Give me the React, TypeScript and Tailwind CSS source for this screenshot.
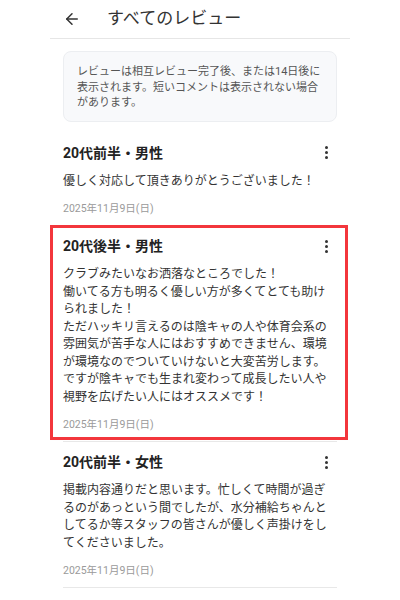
import React from 'react';
import { ArrowLeft } from 'lucide-react';

interface Review {
  title: string;
  body: string[];
  date: string;
  highlight?: boolean;
}

const reviews: Review[] = [
  {
    title: '20代前半・男性',
    body: ['優しく対応して頂きありがとうございました！'],
    date: '2025年11月9日(日)',
  },
  {
    title: '20代後半・男性',
    body: [
      'クラブみたいなお洒落なところでした！',
      '働いてる方も明るく優しい方が多くてとても助けられました！',
      'ただハッキリ言えるのは陰キャの人や体育会系の雰囲気が苦手な人にはおすすめできません、環境が環境なのでついていけないと大変苦労します。',
      'ですが陰キャでも生まれ変わって成長したい人や視野を広げたい人にはオススメです！',
    ],
    date: '2025年11月9日(日)',
    highlight: true,
  },
  {
    title: '20代前半・女性',
    body: [
      '掲載内容通りだと思います。忙しくて時間が過ぎるのがあっという間でしたが、水分補給ちゃんとしてるか等スタッフの皆さんが優しく声掛けをしてくださいました。',
    ],
    date: '2025年11月9日(日)',
  },
];

const MoreDots = () => (
  <div className="flex flex-col items-center gap-[2px] w-[6px]">
    <span className="block w-[3px] h-[3px] rounded-full bg-[#333]" />
    <span className="block w-[3px] h-[3px] rounded-full bg-[#333]" />
    <span className="block w-[3px] h-[3px] rounded-full bg-[#333]" />
  </div>
);

const ReviewItem: React.FC<{ review: Review }> = ({ review }) => {
  return (
    <div className="relative px-[13px]">
      <div className="pt-[10px] pb-[9px] border-b border-[#e8e8e8]">
        <div className="flex items-center justify-between">
          <h2 className="text-[14px] leading-[20px] font-bold text-[#222]">{review.title}</h2>
          <div className="mr-[8px]">
            <MoreDots />
          </div>
        </div>
        <div className="mt-[10px] text-[12px] leading-[17.5px] text-[#333]">
          {review.body.map((line, i) => (
            <p key={i}>{line}</p>
          ))}
        </div>
        <p className="mt-[12px] text-[10.5px] leading-[14px] text-[#9a9a9a]">{review.date}</p>
      </div>
      {review.highlight && (
        <div className="absolute inset-0 -top-[1px] bottom-[2px] right-[2px] border-[3px] border-[#f3363c] pointer-events-none" />
      )}
    </div>
  );
};

export default function App() {
  return (
    <div
      className="w-[400px] min-h-[600px] bg-white"
      style={{ fontFamily: 'Roboto, "Noto Sans CJK JP", sans-serif' }}
    >
      <div className="mx-[50px]">
        <header className="h-[39px] flex items-center border-b border-[#e6e6e6]">
          <ArrowLeft size={18} strokeWidth={2} className="ml-[13px] text-[#333]" />
          <h1 className="ml-[26px] text-[17px] text-[#333]">すべてのレビュー</h1>
        </header>

        <div className="mx-[13px] mt-[12px] rounded-lg bg-[#f8f9fb] border border-[#eceef1] pl-[13px] pr-[10px] pt-[12px] pb-[10px]">
          <p className="text-[11px] leading-[15.5px] text-[#555]">
            レビューは相互レビュー完了後、または14日後に表示されます。短いコメントは表示されない場合があります。
          </p>
        </div>

        <div className="mt-[11px]">
          {reviews.map((r, i) => (
            <ReviewItem key={i} review={r} />
          ))}
        </div>
      </div>
    </div>
  );
}
